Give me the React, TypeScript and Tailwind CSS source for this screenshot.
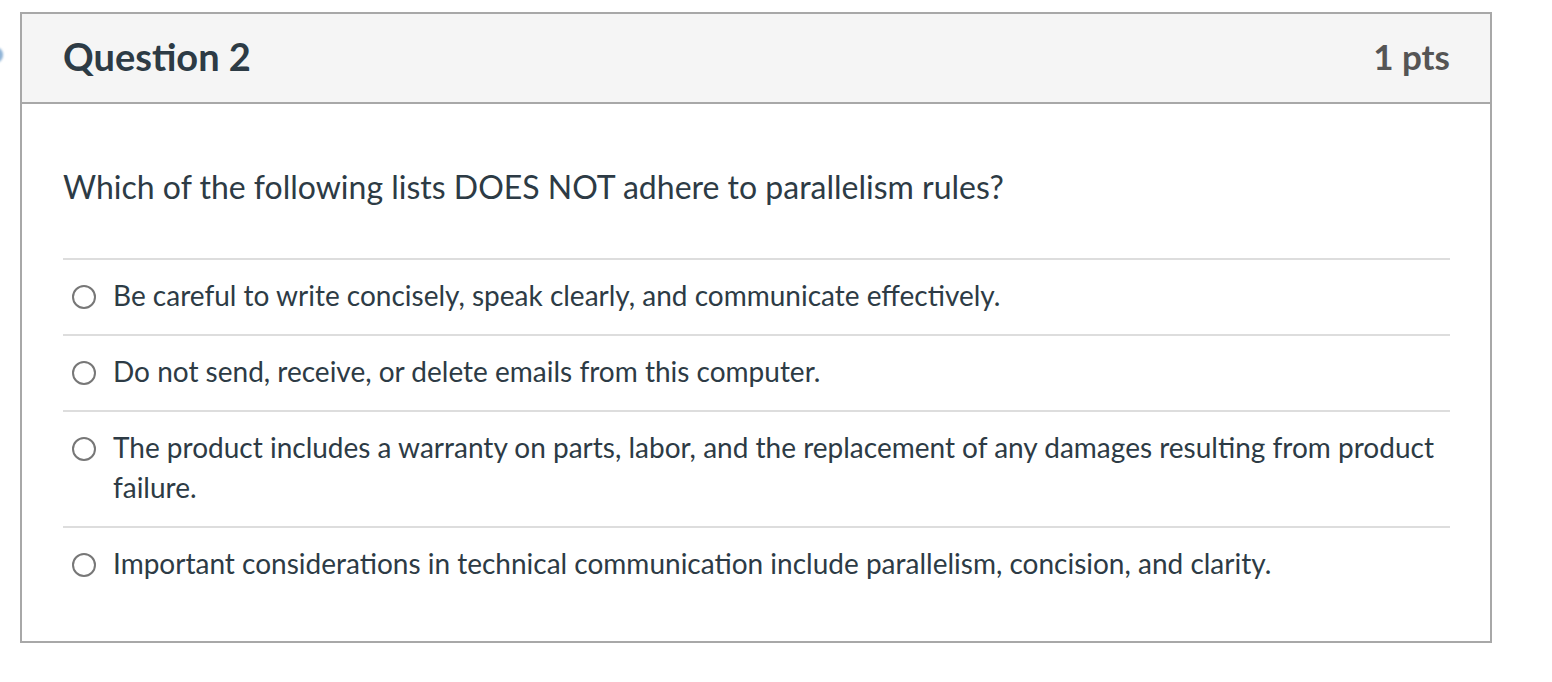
const answers = [
  "Be careful to write concisely, speak clearly, and communicate effectively.",
  "Do not send, receive, or delete emails from this computer.",
  "The product includes a warranty on parts, labor, and the replacement of any damages resulting from product failure.",
  "Important considerations in technical communication include parallelism, concision, and clarity.",
];

export default function App() {
  return (
    <div className="relative min-h-screen bg-white pt-[12px] font-['Lato','Noto_Sans',sans-serif] text-[#2d3b45]">
      {/* partial nav dot at the left edge */}
      <div className="absolute left-[-12px] top-[47px] h-[16px] w-[15px] rounded-full bg-[#8fb3d6] blur-[1px]" />

      <div className="ml-[20px] w-[1472px] border-2 border-[#a8a8a8]">
        {/* header */}
        <div className="flex h-[90px] items-center justify-between border-b-2 border-[#a8a8a8] bg-[#f5f5f5] pb-[4px] pl-[41px] pr-[40px]">
          <h2 className="text-[38px] font-bold leading-none">Question 2</h2>
          <div className="text-[35px] font-bold leading-none text-[#555555]">1 pts</div>
        </div>

        {/* body */}
        <div className="pl-[41px] pr-[40px] pb-[39px]">
          <p className="pt-[63px] pb-[51px] text-[32px] leading-[40px]">
            Which of the following lists DOES NOT adhere to parallelism rules?
          </p>

          <div>
            {answers.map((a) => (
              <label
                key={a}
                className="flex items-start border-t-2 border-[#dddddd] pt-[15px] pb-[19px] pl-[9px]"
              >
                <span className="mt-[10px] h-[24px] w-[24px] shrink-0 rounded-full border-2 border-[#777777] bg-white" />
                <span className="pl-[17px] text-[28px] leading-[40px]">{a}</span>
              </label>
            ))}
          </div>
        </div>
      </div>
    </div>
  );
}
